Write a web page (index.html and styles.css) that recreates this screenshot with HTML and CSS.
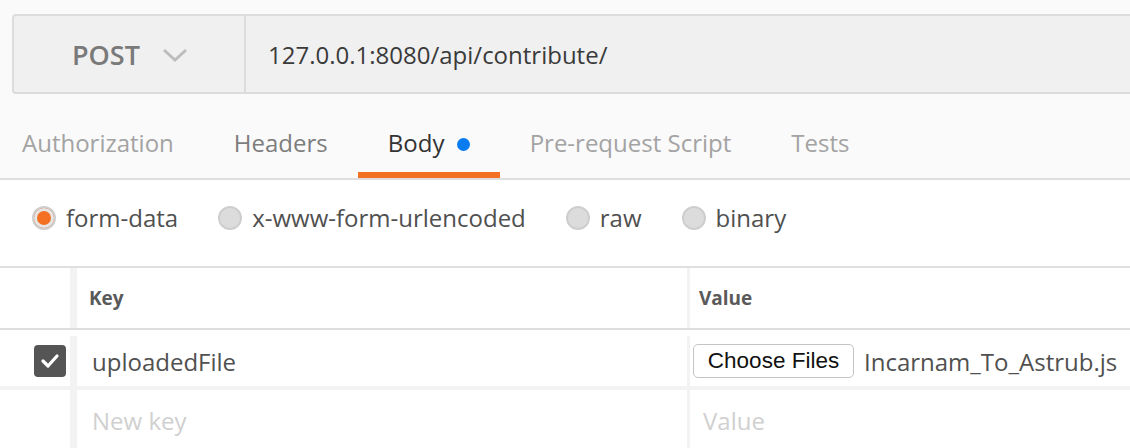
FILE: index.html
```html
<!DOCTYPE html>
<html>
<head>
<meta charset="utf-8">
<link rel="stylesheet" href="styles.css">
</head>
<body>
<div class="top">
  <div class="urlbar">
    <div class="method">
      <span class="method-name">POST</span>
      <svg class="chev" width="26" height="14" viewBox="0 0 26 14"><path d="M2 2 L13 12 L24 2" fill="none" stroke="#bdbdbd" stroke-width="3"/></svg>
    </div>
    <div class="url">127.0.0.1:8080/api/contribute/</div>
  </div>
  <div class="tabs">
    <div class="tab first">Authorization</div>
    <div class="tab mid">Headers</div>
    <div class="tab active">Body <span class="dot"></span></div>
    <div class="tab">Pre-request Script</div>
    <div class="tab">Tests</div>
  </div>
</div>
<div class="modes">
  <label class="mode"><span class="radio on"></span>form-data</label>
  <label class="mode"><span class="radio"></span>x-www-form-urlencoded</label>
  <label class="mode"><span class="radio"></span>raw</label>
  <label class="mode"><span class="radio"></span>binary</label>
</div>
<div class="table">
  <div class="row head">
    <div class="c0"></div>
    <div class="c1">Key</div>
    <div class="c2">Value</div>
  </div>
  <div class="row r1">
    <div class="c0"><span class="check"><svg width="20" height="16" viewBox="0 0 20 16"><path d="M3 8 L8 13 L17 3" fill="none" stroke="#fff" stroke-width="3.2" stroke-linecap="round" stroke-linejoin="round"/></svg></span></div>
    <div class="c1 keytext">uploadedFile</div>
    <div class="c2 val"><span class="btn">Choose Files</span><span class="fname">Incarnam_To_Astrub.js</span></div>
  </div>
  <div class="row r2">
    <div class="c0"></div>
    <div class="c1 ph">New key</div>
    <div class="c2 ph">Value</div>
  </div>
</div>
</body>
</html>
```
FILE: styles.css
```css
* { box-sizing: border-box; }
html, body { margin: 0; padding: 0; }
body {
  width: 1130px;
  height: 448px;
  overflow: hidden;
  background: #fff;
  font-family: "Open Sans", "DejaVu Sans", sans-serif;
}
.top {
  background: #fafafa;
  padding-top: 14px;
  border-bottom: 2px solid #dedede;
}
.urlbar {
  margin-left: 12px;
  width: 1130px;
  height: 80px;
  display: flex;
  background: #f0f0f0;
  border: 2px solid #dcdcdc;
  border-radius: 4px;
}
.method {
  width: 232px;
  border-right: 2px solid #dcdcdc;
  display: flex;
  align-items: center;
  padding-left: 58px;
  gap: 22px;
}
.method-name {
  font-size: 27px;
  font-weight: 600;
  color: #7a7a7a;
}
.chev { margin-top: 2px; }
.url {
  display: flex;
  align-items: center;
  padding-left: 22px;
  font-size: 24px;
  color: #3a3a3a;
}
.tabs {
  display: flex;
  margin-top: 28px;
  height: 56px;
}
.tab {
  padding: 0 30px;
  font-size: 24px;
  color: #a3a3a3;
  line-height: 30px;
  height: 56px;
  padding-top: 6px;
}
.tab.first { padding-left: 22px; }
.tab.mid { color: #7d7d7d; }
.tab.active {
  color: #333;
  border-bottom: 6px solid #f47023;
  padding-right: 30px;
}
.dot {
  display: inline-block;
  width: 13px;
  height: 13px;
  border-radius: 50%;
  background: #0a7bf0;
  margin-left: 6px;
  vertical-align: 1px;
}
.modes {
  display: flex;
  align-items: center;
  height: 88px;
  padding-left: 32px;
  padding-bottom: 11px;
  border-bottom: 2px solid #e0e0e0;
}
.mode {
  display: flex;
  align-items: center;
  gap: 10px;
  margin-right: 40px;
  font-size: 24px;
  color: #505050;
}
.radio {
  width: 24px;
  height: 24px;
  border-radius: 50%;
  background: #dcdcdc;
  border: 2px solid #cecece;
}
.radio.on {
  background: #f47023;
  box-shadow: inset 0 0 0 3px #e6e6e6;
}
.table { display: flex; flex-direction: column; }
.row {
  display: flex;
  align-items: stretch;
}
.c0 {
  width: 77px;
  border-right: 7px solid #f3f3f3;
  display: flex;
  align-items: center;
  justify-content: flex-end;
  padding-right: 4px;
}
.c1 {
  width: 613px;
  border-right: 3px solid #f3f3f3;
  display: flex;
  align-items: center;
  padding-left: 15px;
}
.c2 {
  flex: 1;
  display: flex;
  align-items: center;
  padding-left: 9px;
}
.head {
  height: 62px;
  border-bottom: 2px solid #dddddd;
  font-size: 19px;
  font-weight: 700;
  color: #5a5a5a;
}
.head .c1 { padding-left: 12px; }
.r1 {
  height: 60px;
  padding-top: 6px;
  border-bottom: 4px solid #f3f3f3;
}
.check {
  width: 32px;
  height: 32px;
  border-radius: 4px;
  background: #555;
  display: flex;
  align-items: center;
  justify-content: center;
}
.keytext {
  font-size: 24px;
  color: #505050;
}
.val { padding-left: 3px; }
.btn {
  font-family: "Liberation Sans", Arial, sans-serif;
  font-size: 22.5px;
  color: #111;
  background: #fff;
  border: 1px solid #c4c4c4;
  border-radius: 5px;
  height: 34px;
  width: 161px;
  display: flex;
  align-items: center;
  justify-content: center;
}
.fname {
  font-size: 24px;
  color: #505050;
  margin-left: 10px;
}
.r2 { height: 60px; }
.ph {
  font-size: 24px;
  color: #d0d0d0;
}
.r2 .c2 { padding-left: 13px; }
```
